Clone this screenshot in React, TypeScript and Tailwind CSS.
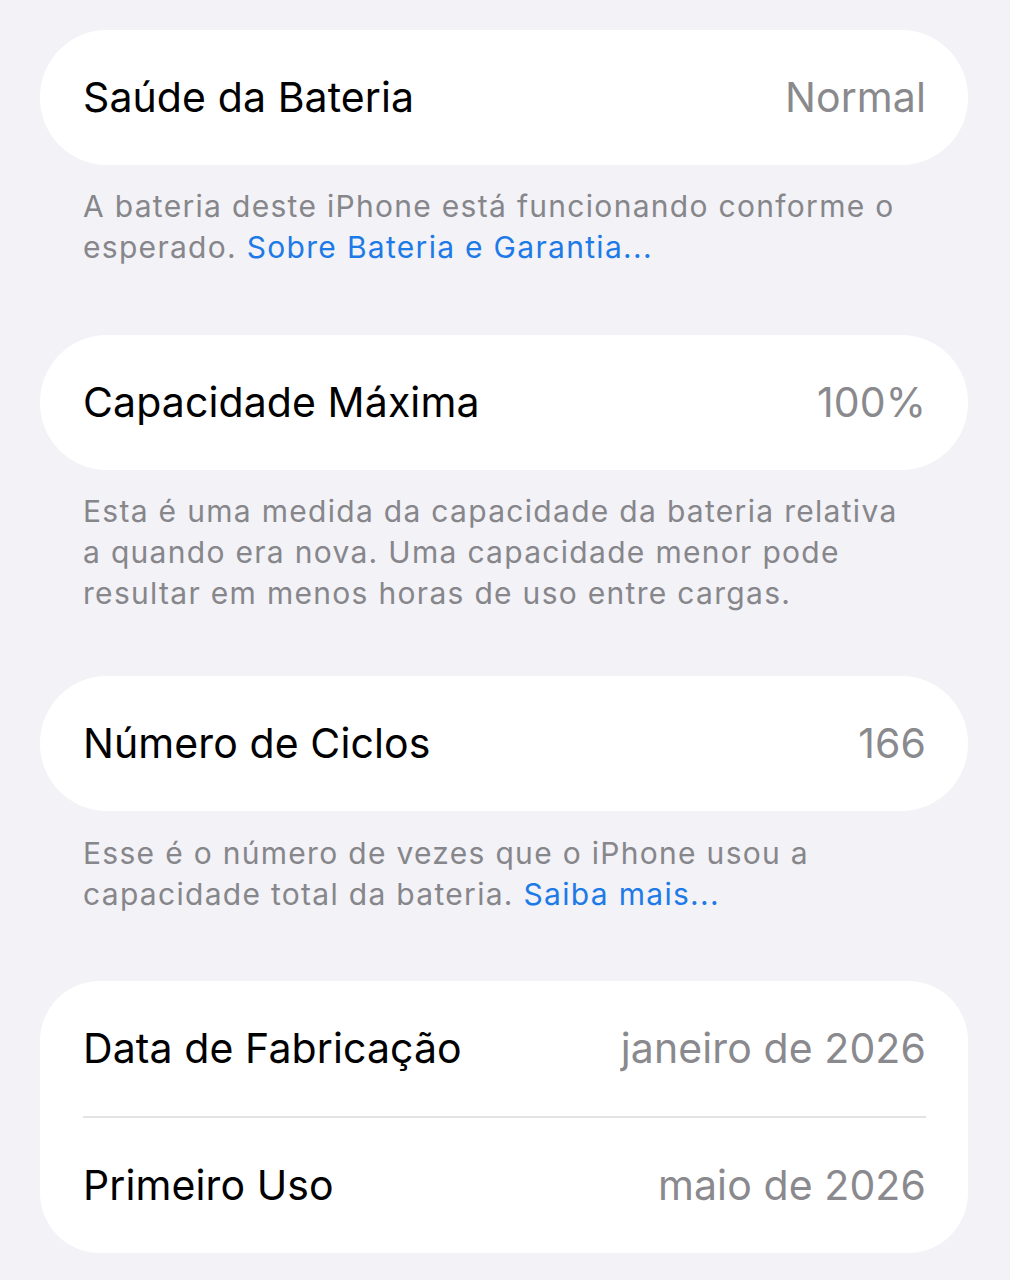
import React from "react";

const font = { fontFamily: "Inter, 'Noto Sans', sans-serif" };

function Row({ label, value }: { label: string; value: string }) {
  return (
    <div className="flex h-[135px] items-center justify-between pl-[43px] pr-[42px]">
      <span className="text-[41px] tracking-[0.1px] text-black">{label}</span>
      <span className="text-[41px] tracking-[0.1px] text-[#8a8a8e]">{value}</span>
    </div>
  );
}

export default function App() {
  return (
    <div className="min-h-[1280px] w-[1010px] bg-[#f2f2f7] pl-[40px] pr-[42px] pt-[30px]" style={font}>
      <div className="rounded-[67px] bg-white">
        <Row label="Saúde da Bateria" value="Normal" />
      </div>
      <p className="mt-[21px] mb-[67px] whitespace-nowrap px-[43px] text-[30px] leading-[41px] tracking-[1.3px] text-[#86868b]">
        A bateria deste iPhone está funcionando conforme o
        <br />
        esperado. <span className="text-[#1d7ae6]">Sobre Bateria e Garantia...</span>
      </p>

      <div className="rounded-[67px] bg-white">
        <Row label="Capacidade Máxima" value="100%" />
      </div>
      <p className="mt-[21px] mb-[62px] whitespace-nowrap px-[43px] text-[30px] leading-[41px] tracking-[1.3px] text-[#86868b]">
        Esta é uma medida da capacidade da bateria relativa
        <br />
        a quando era nova. Uma capacidade menor pode
        <br />
        resultar em menos horas de uso entre cargas.
      </p>

      <div className="rounded-[67px] bg-white">
        <Row label="Número de Ciclos" value="166" />
      </div>
      <p className="mt-[22px] mb-[66px] whitespace-nowrap px-[43px] text-[30px] leading-[41px] tracking-[1.3px] text-[#86868b]">
        Esse é o número de vezes que o iPhone usou a
        <br />
        capacidade total da bateria. <span className="text-[#1d7ae6]">Saiba mais...</span>
      </p>

      <div className="rounded-[60px] bg-white">
        <Row label="Data de Fabricação" value="janeiro de 2026" />
        <div className="ml-[43px] mr-[42px] h-[2px] bg-[#e3e3e6]" />
        <Row label="Primeiro Uso" value="maio de 2026" />
      </div>
    </div>
  );
}
